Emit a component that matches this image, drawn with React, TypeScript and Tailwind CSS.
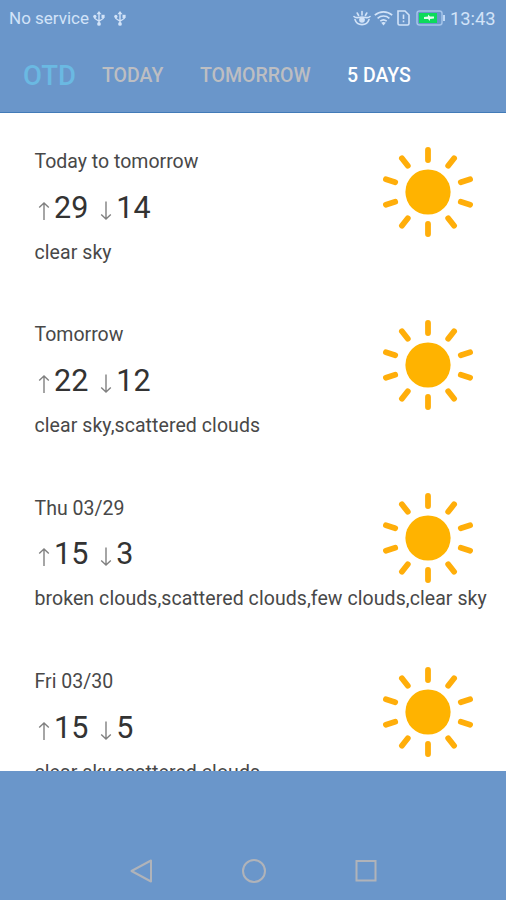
const days = [
  { title: 'Today to tomorrow', high: 29, low: 14, text: 'clear sky' },
  { title: 'Tomorrow', high: 22, low: 12, text: 'clear sky,scattered clouds' },
  { title: 'Thu 03/29', high: 15, low: 3, text: 'broken clouds,scattered clouds,few clouds,clear sky' },
  { title: 'Fri 03/30', high: 15, low: 5, text: 'clear sky,scattered clouds' },
];

function Sun() {
  return (
    <svg className="mr-[33px] mt-[33.7px] h-[90px] w-[90px] shrink-0" viewBox="-45 -45 90 90">
      <circle r="22.6" fill="#ffb300" />
      <path
        d="M0 -42V-32M0 42V32M20.2 -26.2L26.1 -33.7M-20.2 -26.2L-26.1 -33.7M20.2 26.2L26.1 33.7M-20.2 26.2L-26.1 33.7M32.8 -9.8L42.1 -12.7M-32.8 -9.8L-42.1 -12.7M32.8 9.8L42.1 12.7M-32.8 9.8L-42.1 12.7"
        stroke="#ffae0a"
        strokeWidth="5.8"
        strokeLinecap="round"
      />
    </svg>
  );
}

function Usb() {
  return (
    <svg className="h-[17px] w-[12px]" viewBox="0 0 13 17" fill="none" stroke="#d2e3f8" strokeWidth="1.5">
      <path d="M6.5 3V14M2 6V8.5L6.5 11.5L11 8.5V6" />
      <path d="M6.5 .5L9.2 4H3.8Z" fill="#d2e3f8" stroke="none" />
      <circle cx="6.5" cy="14.4" r="2" fill="#d2e3f8" stroke="none" />
      <circle cx="2" cy="6.2" r="1.8" fill="#d2e3f8" stroke="none" />
      <path d="M9.2 4.5h3.4v3.4h-3.4z" fill="#d2e3f8" stroke="none" />
    </svg>
  );
}

function Arrow({ down = false }: { down?: boolean }) {
  return (
    <svg className="mt-[12px] h-[20px] w-[12px] shrink-0" viewBox="0 0 12 20" fill="none" stroke="#808080" strokeWidth="1.4">
      {down ? <path d="M6 .5V18M1.2 13.5L6 18L10.8 13.5" /> : <path d="M6 19V2M1.2 6.5L6 2L10.8 6.5" />}
    </svg>
  );
}

function StatusIcons() {
  return (
    <div className="flex h-full items-center text-[#d2e3f8]">
      <svg className="h-[16px] w-[18px]" viewBox="0 0 18 16" fill="none" stroke="currentColor" strokeWidth="1.6" strokeLinecap="round">
        <path d="M1 6.5C3.5 9 5 7 9 7S14.500 9 17 6.500M2 9.500C4 16.300 14 16.300 16 9.500" />
        <circle cx="9" cy="9.800" r="2.900" fill="currentColor" stroke="none" />
        <path d="M9 1.500V5M4.200 3L5.600 5.500M13.800 3L12.400 5.500" />
      </svg>
      <svg className="ml-[3px] h-[16px] w-[19px]" viewBox="0 0 19 16" fill="none" stroke="currentColor" strokeWidth="1.6">
        <path d="M.8 5.2C5.8 .7 13.2 .7 18.2 5.2M3.6 8.3C7 5.3 12 5.3 15.4 8.3M6.3 11.2C8.2 9.6 10.8 9.6 12.7 11.2" />
        <path d="M7.2 12.7Q9.5 11.2 11.8 12.7L9.500 15.500Z" fill="currentColor" stroke="none" />
      </svg>
      <svg className="ml-[4px] h-[16px] w-[13px]" viewBox="0 0 13 16" fill="none" stroke="currentColor" strokeWidth="1.6">
        <path d="M1 1H8L12 5V13.500Q12 15 10.500 15H2.500Q1 15 1 13.500Z" />
        <path d="M6.500 4.500V9M6.500 10.500V12.300" />
      </svg>
      <svg className="ml-[6px] h-[16px] w-[30px]" viewBox="0 0 30 16">
        <rect x="1" y="1" width="25" height="14" rx="2.500" fill="none" stroke="#a4c3e9" strokeWidth="1.5" />
        <rect x="3" y="3" width="18" height="10" fill="#0cdb5b" />
        <path d="M8 7L12 6.500V4.500L14 6.500H18V8.500L14 9V11L12 9H8Z" fill="#e1ffee" />
        <path d="M28 5V11" stroke="#bfd8f5" strokeWidth="2" />
      </svg>
    </div>
  );
}

export default function App() {
  return (
    <div className="flex h-[900px] w-[506px] flex-col overflow-hidden bg-[#6a96ca] font-['Roboto',sans-serif]">
      <div className="flex h-[36px] shrink-0 items-center pl-[9px] pr-[8px] text-[#d2e3f8]">
        <span className="w-[84px] whitespace-nowrap pt-px text-[17px]">No service</span>
        <Usb />
        <span className="w-[9px]" />
        <Usb />
        <span className="flex-1" />
        <StatusIcons />
        <span className="ml-[4px] w-[48px] pt-px text-[18.3px]">13:43</span>
      </div>
      <div className="flex h-[77px] shrink-0 items-center whitespace-nowrap border-b border-[#427bb8] pt-[3px] text-[19.5px] font-medium text-[#bdbec2]">
        <span className="w-[102px] pl-[23px] text-[27.5px] text-[#6ab9e2]">OTD</span>
        <span className="w-[98px]">TODAY</span>
        <span className="w-[147px]">TOMORROW</span>
        <span className="text-white">5 DAYS</span>
      </div>
      <div className="h-[658px] shrink-0 overflow-hidden bg-white text-[#484848]">
        {days.map((day) => (
          <div key={day.title} className="flex h-[173.4px] items-start justify-between">
            <div className="w-0 whitespace-nowrap pl-[34.5px] pt-[37px] text-[19.5px] leading-[24px]">
              <div>{day.title}</div>
              <div className="mt-[14.5px] flex h-[38px] pl-[3.5px] text-[30.5px] leading-[38px] text-[#333]">
                <Arrow />
                <span className="ml-[4px] mr-[12px]">{day.high}</span>
                <Arrow down />
                <span className="ml-[4px]">{day.low}</span>
              </div>
              <div className="mt-[14px] tracking-[0.07px]">{day.text}</div>
            </div>
            <Sun />
          </div>
        ))}
      </div>
      <div className="flex flex-1 items-end justify-center gap-[88px] pb-[17px] pl-[2px]">
        <svg className="h-[24px] w-[24px]" viewBox="0 0 24 24" fill="none" stroke="#b0b3b9" strokeWidth="2" strokeLinejoin="round">
          <path d="M1.500 12L21 1.500V22.500Z" />
        </svg>
        <svg className="h-[24px] w-[24px]" viewBox="0 0 24 24" fill="none" stroke="#b0b3b9" strokeWidth="2">
          <circle cx="12" cy="12" r="11" />
        </svg>
        <svg className="h-[24px] w-[24px]" viewBox="0 0 24 24" fill="none" stroke="#b0b3b9" strokeWidth="2">
          <rect x="2.500" y="2" width="19" height="19.500" />
        </svg>
      </div>
    </div>
  );
}
